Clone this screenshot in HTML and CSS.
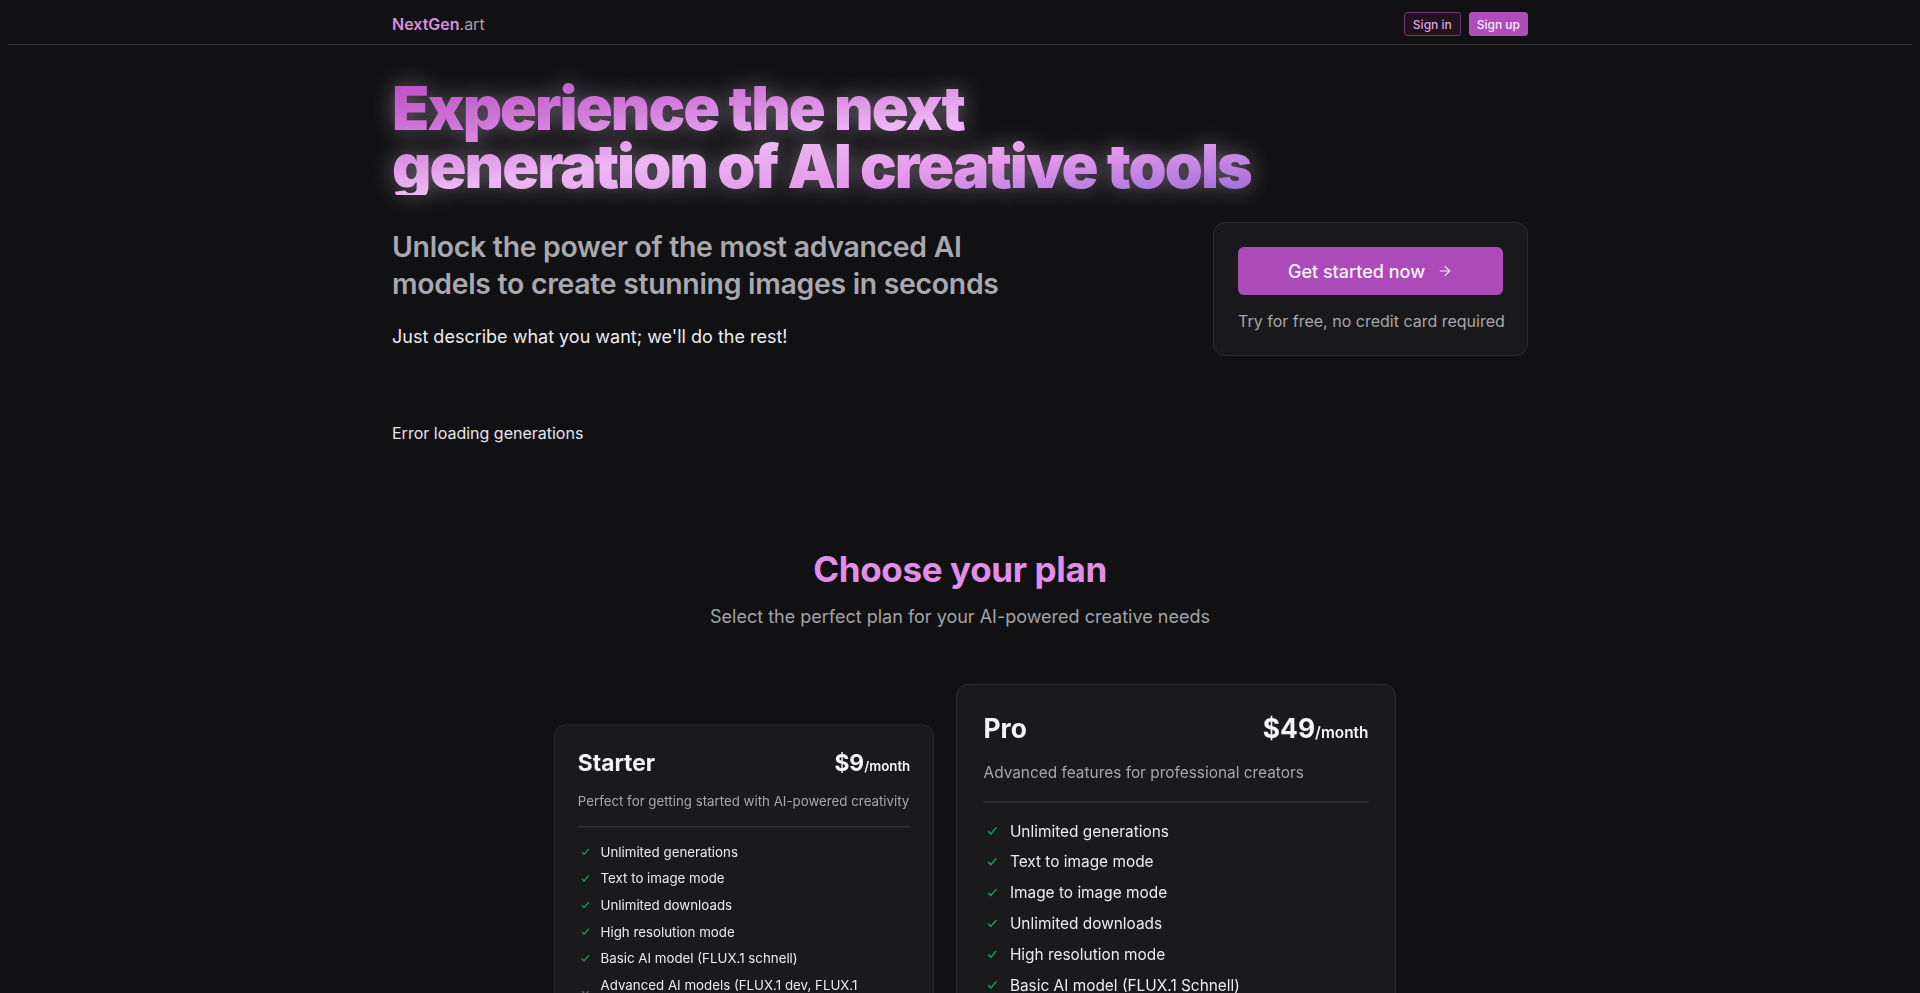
FILE: index.html
```html
<!DOCTYPE html>
<html lang="en">
<head>
<meta charset="utf-8">
<title>NextGen.art</title>
<link rel="stylesheet" href="styles.css">
</head>
<body>
<header class="site-header">
  <div class="header-inner">
    <a class="logo" href="#"><span class="logo-brand">NextGen</span><span class="logo-tld">.art</span></a>
    <nav class="auth">
      <button class="btn btn-signin">Sign in</button>
      <button class="btn btn-signup">Sign up</button>
    </nav>
  </div>
</header>
<main class="container">
  <section class="hero">
    <h1 class="hero-title">Experience the next<br>generation of AI creative tools</h1>
    <div class="hero-row">
      <div class="hero-copy">
        <h2 class="hero-sub">Unlock the power of the most advanced AI<br>models to create stunning images in seconds</h2>
        <p class="hero-note">Just describe what you want; we'll do the rest!</p>
      </div>
      <div class="cta-card">
        <button class="cta-btn">Get started now
          <svg class="cta-arrow" viewBox="0 0 24 24" width="16" height="16" fill="none" stroke="currentColor" stroke-width="1.6" stroke-linecap="round" stroke-linejoin="round"><path d="M5 12h14"/><path d="m12 5 7 7-7 7"/></svg>
        </button>
        <p class="cta-note">Try for free, no credit card required</p>
      </div>
    </div>
  </section>

  <p class="gen-error">Error loading generations</p>

  <section class="pricing">
    <h2 class="pricing-title">Choose your plan</h2>
    <p class="pricing-sub">Select the perfect plan for your AI-powered creative needs</p>
    <div class="plans">
      <article class="plan plan-starter">
        <div class="plan-head">
          <h3 class="plan-name">Starter</h3>
          <div class="price"><span class="amount">$9</span><span class="per">/month</span></div>
        </div>
        <p class="plan-desc">Perfect for getting started with AI-powered creativity</p>
        <ul class="features">
          <li class="feat"><svg class="ic ic-yes" viewBox="0 0 16 16"><path d="M4.5 8.4 6.6 10.6 11.3 5.2"/></svg><span>Unlimited generations</span></li>
          <li class="feat"><svg class="ic ic-yes" viewBox="0 0 16 16"><path d="M4.5 8.4 6.6 10.6 11.3 5.2"/></svg><span>Text to image mode</span></li>
          <li class="feat"><svg class="ic ic-yes" viewBox="0 0 16 16"><path d="M4.5 8.4 6.6 10.6 11.3 5.2"/></svg><span>Unlimited downloads</span></li>
          <li class="feat"><svg class="ic ic-yes" viewBox="0 0 16 16"><path d="M4.5 8.4 6.6 10.6 11.3 5.2"/></svg><span>High resolution mode</span></li>
          <li class="feat"><svg class="ic ic-yes" viewBox="0 0 16 16"><path d="M4.5 8.4 6.6 10.6 11.3 5.2"/></svg><span>Basic AI model (FLUX.1 schnell)</span></li>
          <li class="feat"><svg class="ic ic-no" viewBox="0 0 16 16"><path d="M5 5l6 6M11 5l-6 6"/></svg><span>Advanced AI models (FLUX.1 dev, FLUX.1 Kontext)</span></li>
          <li class="feat"><svg class="ic ic-no" viewBox="0 0 16 16"><path d="M5 5l6 6M11 5l-6 6"/></svg><span>Image to image mode</span></li>
          <li class="feat"><svg class="ic ic-no" viewBox="0 0 16 16"><path d="M5 5l6 6M11 5l-6 6"/></svg><span>Priority support</span></li>
        </ul>
        <button class="plan-btn">Get started</button>
      </article>
      <article class="plan plan-pro">
        <div class="plan-head">
          <h3 class="plan-name">Pro</h3>
          <div class="price"><span class="amount">$49</span><span class="per">/month</span></div>
        </div>
        <p class="plan-desc">Advanced features for professional creators</p>
        <ul class="features">
          <li class="feat"><svg class="ic ic-yes" viewBox="0 0 16 16"><path d="M4.5 8.4 6.6 10.6 11.3 5.2"/></svg><span>Unlimited generations</span></li>
          <li class="feat"><svg class="ic ic-yes" viewBox="0 0 16 16"><path d="M4.5 8.4 6.6 10.6 11.3 5.2"/></svg><span>Text to image mode</span></li>
          <li class="feat"><svg class="ic ic-yes" viewBox="0 0 16 16"><path d="M4.5 8.4 6.6 10.6 11.3 5.2"/></svg><span>Image to image mode</span></li>
          <li class="feat"><svg class="ic ic-yes" viewBox="0 0 16 16"><path d="M4.5 8.4 6.6 10.6 11.3 5.2"/></svg><span>Unlimited downloads</span></li>
          <li class="feat"><svg class="ic ic-yes" viewBox="0 0 16 16"><path d="M4.5 8.4 6.6 10.6 11.3 5.2"/></svg><span>High resolution mode</span></li>
          <li class="feat"><svg class="ic ic-yes" viewBox="0 0 16 16"><path d="M4.5 8.4 6.6 10.6 11.3 5.2"/></svg><span>Basic AI model (FLUX.1 Schnell)</span></li>
          <li class="feat"><svg class="ic ic-yes" viewBox="0 0 16 16"><path d="M4.5 8.4 6.6 10.6 11.3 5.2"/></svg><span>Advanced AI models (FLUX.1 dev, FLUX.1 Kontext)</span></li>
          <li class="feat"><svg class="ic ic-yes" viewBox="0 0 16 16"><path d="M4.5 8.4 6.6 10.6 11.3 5.2"/></svg><span>Priority support</span></li>
        </ul>
        <button class="plan-btn">Get started</button>
      </article>
    </div>
  </section>
</main>
</body>
</html>
```

FILE: styles.css
```css
* { box-sizing: border-box; }

html, body {
  background: #111113;
}

body {
  margin: 0 8px;
  font-family: Inter, "Noto Sans", "Liberation Sans", sans-serif;
  color: #ececee;
}

.site-header {
  height: 45px;
  padding-top: 4px;
  border-bottom: 1px solid #3a3a3e;
}

.header-inner {
  width: 1136px;
  height: 100%;
  margin: 0 auto;
  display: flex;
  align-items: center;
  justify-content: space-between;
}

.logo {
  text-decoration: none;
  font-size: 16px;
  line-height: 24px;
}

.logo-brand {
  color: #d98fe0;
  font-weight: 600;
}

.logo-tld {
  color: #a3a3a8;
  font-weight: 400;
}

.auth {
  display: flex;
  gap: 8px;
}

.btn {
  font-family: inherit;
  font-size: 12px;
  font-weight: 500;
  height: 24px;
  padding: 0 8px;
  border-radius: 3px;
  cursor: pointer;
}

.btn-signin {
  background: #22121f;
  color: #d7a6dd;
  border: 1px solid #6a3a6f;
}

.btn-signup {
  padding: 0 7px;
  background: #ae4cba;
  color: #f6e9f8;
  border: 1px solid #ae4cba;
}

.container {
  width: 1136px;
  margin: 0 auto;
}

.hero {
  padding-top: 34px;
}

.hero-title {
  display: inline-block;
  margin: 0;
  font-size: 61px;
  line-height: 58px;
  font-weight: 900;
  letter-spacing: -0.032em;
  background: linear-gradient(to bottom right, #bb4cc2 0%, #d47edd 28%, #edb7f3 50%, #e498ea 72%, #9b6cdc 100%);
  -webkit-background-clip: text;
  background-clip: text;
  color: transparent;
  filter: drop-shadow(0 0 11px rgba(248, 220, 255, 0.38));
}

.hero-row {
  margin-top: 27px;
  display: flex;
  align-items: center;
  justify-content: space-between;
}

.hero-sub {
  margin: 0;
  font-size: 28.4px;
  line-height: 37px;
  font-weight: 600;
  color: #a8a8ae;
  letter-spacing: -0.01em;
}

.hero-note {
  margin: 21px 0 0;
  font-size: 18px;
  line-height: 28px;
  color: #ededf0;
}

.cta-card {
  width: 315px;
  padding: 24px;
  border: 1px solid #2b2b30;
  border-radius: 12px;
  background: #19191c;
}

.cta-btn {
  width: 100%;
  height: 48px;
  border: 0;
  border-radius: 6px;
  background: #ad4ab9;
  color: #fbf3fc;
  font-family: inherit;
  font-size: 18px;
  font-weight: 500;
  display: flex;
  align-items: center;
  justify-content: center;
  gap: 12px;
  cursor: pointer;
}

.cta-arrow {
  flex: none;
}

.cta-note {
  margin: 16px 0 0;
  font-size: 16px;
  line-height: 20px;
  color: #a6a6aa;
  text-align: center;
  white-space: nowrap;
}

.gen-error {
  margin: 65px 0 0;
  font-size: 16px;
  line-height: 24px;
  color: #e6e6ea;
}

.pricing {
  margin-top: 104px;
  text-align: center;
}

.pricing-title {
  margin: 0;
  font-size: 35px;
  line-height: 40px;
  font-weight: 700;
  color: #e28ee8;
  letter-spacing: -0.01em;
}

.pricing-sub {
  margin: 14px 0 0;
  font-size: 18px;
  line-height: 28px;
  color: #a3a3a8;
}

.plans {
  margin-top: 80px;
  display: flex;
  justify-content: center;
  align-items: stretch;
  gap: 32px;
  text-align: left;
}

.plan {
  width: 400px;
  padding: 24px;
  border: 1px solid #2d2d31;
  border-radius: 12px;
  background: #1a1a1d;
  display: flex;
  flex-direction: column;
  transform-origin: 50% 273px;
}

.plan-starter {
  transform: scale(0.95);
}

.plan-pro {
  transform: scale(1.1);
}

.plan-head {
  display: flex;
  justify-content: space-between;
  align-items: baseline;
  height: 32px;
}

.plan-name {
  margin: 0;
  font-size: 24px;
  line-height: 32px;
  font-weight: 700;
  color: #f4f4f5;
}

.price {
  color: #f4f4f5;
  font-weight: 700;
}

.amount {
  font-size: 24px;
  line-height: 32px;
}

.per {
  font-size: 14px;
  font-weight: 600;
}

.plan-desc {
  margin: 14px 0 0;
  padding-bottom: 16px;
  border-bottom: 1px solid #3a3a3f;
  font-size: 14px;
  line-height: 20px;
  color: #a6a6ab;
}

.features {
  list-style: none;
  margin: 16px 0 0;
  padding: 0;
  display: flex;
  flex-direction: column;
  gap: 8px;
}

.feat {
  display: flex;
  align-items: center;
  gap: 8px;
  font-size: 14px;
  line-height: 20px;
  color: #ebebee;
}

.ic {
  width: 16px;
  height: 16px;
  flex: none;
  fill: none;
  stroke-width: 1.3;
  stroke-linecap: round;
  stroke-linejoin: round;
}

.ic-yes {
  stroke: #1f9d4a;
}

.ic-no {
  stroke: #6b6b70;
}

.plan-btn {
  margin-top: 24px;
  height: 40px;
  border: 0;
  border-radius: 6px;
  background: #ad4ab9;
  color: #fff;
  font-family: inherit;
  font-size: 14px;
  font-weight: 500;
}
```
